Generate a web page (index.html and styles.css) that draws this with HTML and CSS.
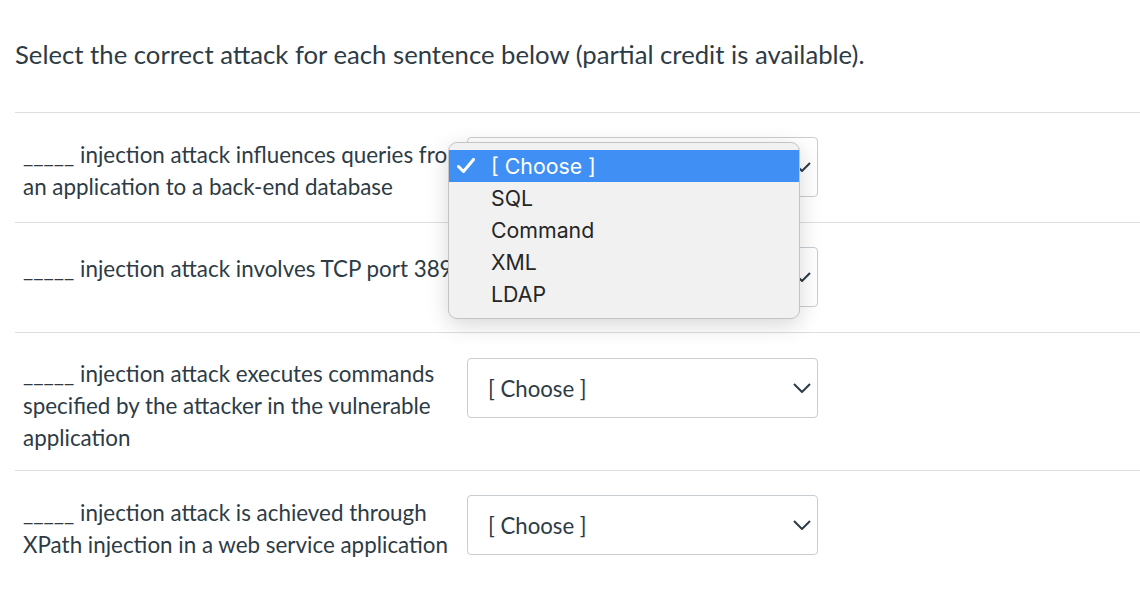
FILE: index.html
```html
<!DOCTYPE html>
<html lang="en">
<head>
<meta charset="utf-8">
<title>Quiz question</title>
<link rel="stylesheet" href="styles.css">
</head>
<body>
<div class="question">
  <p class="prompt">Select the correct attack for each sentence below (partial credit is available).</p>
  <div class="answers">
    <div class="row">
      <div class="text">_____ injection attack influences queries from an application to a back-end database</div>
      <div class="select-wrap">
        <div class="select"><span>[ Choose ]</span><svg class="chev" viewBox="0 0 18 10" width="18" height="10"><path d="M1 1 L9 9 L17 1" fill="none" stroke="#2d3b45" stroke-width="2"/></svg></div>
        <div class="menu">
          <div class="item selected"><svg class="check" viewBox="0 0 18 16" width="18" height="16"><path d="M1.5 8.5 L6.5 13.5 L16.5 1.5" fill="none" stroke="#fff" stroke-width="3" stroke-linecap="round" stroke-linejoin="round"/></svg>[ Choose ]</div>
          <div class="item">SQL</div>
          <div class="item">Command</div>
          <div class="item">XML</div>
          <div class="item">LDAP</div>
        </div>
      </div>
    </div>
    <div class="row">
      <div class="text single">_____ injection attack involves TCP port 389</div>
      <div class="select-wrap">
        <div class="select"><span>[ Choose ]</span><svg class="chev" viewBox="0 0 18 10" width="18" height="10"><path d="M1 1 L9 9 L17 1" fill="none" stroke="#2d3b45" stroke-width="2"/></svg></div>
      </div>
    </div>
    <div class="row tall">
      <div class="text">_____ injection attack executes commands specified by the attacker in the vulnerable application</div>
      <div class="select-wrap">
        <div class="select"><span>[ Choose ]</span><svg class="chev" viewBox="0 0 18 10" width="18" height="10"><path d="M1 1 L9 9 L17 1" fill="none" stroke="#2d3b45" stroke-width="2"/></svg></div>
      </div>
    </div>
    <div class="row">
      <div class="text">_____ injection attack is achieved through XPath injection in a web service application</div>
      <div class="select-wrap">
        <div class="select"><span>[ Choose ]</span><svg class="chev" viewBox="0 0 18 10" width="18" height="10"><path d="M1 1 L9 9 L17 1" fill="none" stroke="#2d3b45" stroke-width="2"/></svg></div>
      </div>
    </div>
  </div>
</div>
</body>
</html>
```
FILE: styles.css
```css
html, body {
  margin: 0;
  padding: 0;
  background: #fff;
}
body {
  font-family: Lato, "Noto Sans", sans-serif;
  color: #2d3b45;
  overflow: hidden;
}
.question {
  padding-left: 15px;
}
.prompt {
  margin: 0;
  padding-top: 37px;
  height: 112px;
  box-sizing: border-box;
  font-size: 25.7px;
  line-height: 34px;
}
.answers {
  border-top: 1px solid #dcdfe1;
}
.row {
  display: flex;
  align-items: flex-start;
  padding: 24px 0 16px 8px;
  border-bottom: 1px solid #dcdfe1;
}
.row.tall {
  padding-top: 25px;
}
.row:last-child {
  border-bottom: none;
}
.text {
  width: 444px;
  font-size: 22.4px;
  line-height: 32px;
  align-self: center;
  margin-top: -2px;
}
.text.single {
  align-self: flex-start;
  margin-top: 0;
  padding-top: 6px;
}
.row.tall .text {
  margin-top: 0;
}
.select-wrap {
  position: relative;
  padding-bottom: 9px;
}
.select {
  width: 351px;
  height: 60px;
  box-sizing: border-box;
  border: 1px solid #c7cdd1;
  border-radius: 4px;
  display: flex;
  align-items: center;
  justify-content: space-between;
  padding: 0 6px 0 20px;
  font-size: 22.2px;
  background: #fff;
}
.chev {
  display: block;
}
.menu {
  position: absolute;
  left: -19px;
  top: 5px;
  width: 352px;
  box-sizing: border-box;
  padding: 7px 0 8px;
  background: #f1f1f1;
  border: 1px solid #c4c4c4;
  border-radius: 9px;
  box-shadow: 0 6px 22px rgba(0, 0, 0, 0.16);
  font-family: Inter, "Open Sans", sans-serif;
  font-size: 21.3px;
  color: #262626;
  z-index: 2;
}
.item {
  height: 32px;
  line-height: 32px;
  padding-left: 42px;
  position: relative;
}
.item.selected {
  background: #3f8ff5;
  color: #fff;
}
.check {
  position: absolute;
  left: 8px;
  top: 8px;
}
```
